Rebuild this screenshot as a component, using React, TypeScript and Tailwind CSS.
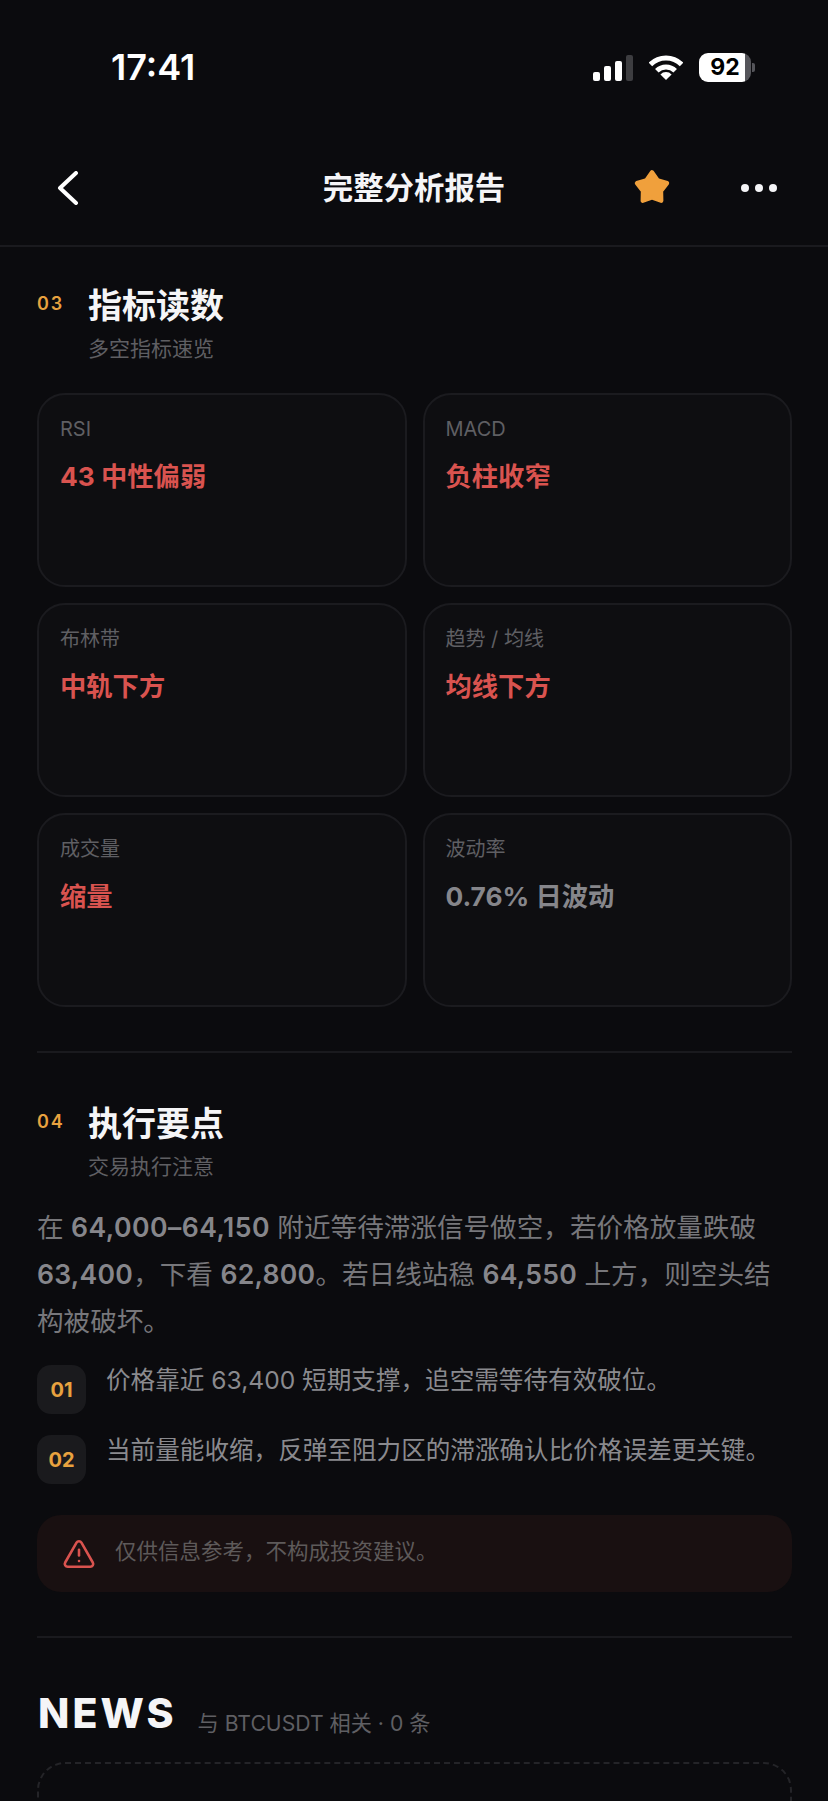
import { TriangleAlert } from "lucide-react";

const indicators = [
    { label: "RSI", value: "43 中性偏弱", color: "text-[#d9534f]" },
    { label: "MACD", value: "负柱收窄", color: "text-[#d9534f]" },
    { label: "布林带", value: "中轨下方", color: "text-[#d9534f]" },
    { label: "趋势 / 均线", value: "均线下方", color: "text-[#d9534f]" },
    { label: "成交量", value: "缩量", color: "text-[#d9534f]" },
    { label: "波动率", value: "0.76% 日波动", color: "text-[#86868b]" },
];

const points = [
    { no: "01", text: "价格靠近 63,400 短期支撑，追空需等待有效破位。" },
    { no: "02", text: "当前量能收缩，反弹至阻力区的滞涨确认比价格误差更关键。" },
];

function SectionHead({ no, title, sub }: { no: string; title: string; sub: string }) {
    return (
        <div className="flex items-start">
            <div className="w-[51px] shrink-0 pt-[9px] text-[18px] leading-[24px] font-semibold tracking-[2px] text-[#e8a23f]">{no}</div>
            <div>
                <div className="pt-px text-[34px] leading-[44px] font-bold text-[#f5f5f7]">{title}</div>
                <div className="mt-[6px] text-[21px] leading-[30px] text-[#5f5f63]">{sub}</div>
            </div>
        </div>
    );
}

export default function App() {
    return (
        <div className="h-[1801px] overflow-hidden bg-[#0b0b0e] font-['Inter','Noto_Sans_CJK_SC',sans-serif]">
            {/* Status bar */}
            <div className="flex h-[134px] items-center justify-between pl-[111px] pr-[73px]">
                <span className="text-[36px] font-semibold text-white">17:41</span>
                <div className="flex items-center">
                    <div className="flex h-[27px] items-end gap-[4px]">
                        <span className="h-[9px] w-[7px] rounded-[2px] bg-white" />
                        <span className="h-[15px] w-[7px] rounded-[2px] bg-white" />
                        <span className="h-[20px] w-[7px] rounded-[2px] bg-white" />
                        <span className="h-[26px] w-[7px] rounded-[2px] bg-[#3d3d40]" />
                    </div>
                    <svg className="ml-[16px]" width="34" height="26" viewBox="0 0 34 26" fill="none">
                        <path d="M1.4 10.4A22 22 0 0 1 32.6 10.4" stroke="#fff" strokeWidth="5" />
                        <path d="M7.8 16.8A13 13 0 0 1 26.2 16.8" stroke="#fff" strokeWidth="5" />
                        <path d="M17 26L11.4 20.4A8 8 0 0 1 22.6 20.4Z" fill="#fff" />
                    </svg>
                    <div className="ml-[16px] flex items-center">
                        <div className="flex h-[29px] w-[52px] items-center justify-center rounded-[9px] bg-[linear-gradient(90deg,#ffffff_88%,#55555a_88%)] text-[23px] font-bold text-black">
                            92
                        </div>
                        <span className="ml-[1px] h-[9px] w-[3px] rounded-r-[2px] bg-[#55555a]" />
                    </div>
                </div>
            </div>

            {/* Nav */}
            <header className="grid h-[113px] grid-cols-[1fr_auto_1fr] items-center border-b-2 border-[#1a1a1e] pb-[4px]">
                <div className="pl-[57px]">
                    <svg className="block" width="22" height="34" viewBox="0 0 22 34" fill="none">
                        <path d="M19 2L3 17L19 32" stroke="#fff" strokeWidth="4" strokeLinecap="round" strokeLinejoin="round" />
                    </svg>
                </div>
                <div className="text-[30.4px] leading-[40px] font-semibold text-[#f5f5f7]">完整分析报告</div>
                <div className="flex items-center justify-end pr-[51px]">
                    <svg width="38" height="38" viewBox="0 0 36 36" fill="#f0a03c" stroke="#f0a03c" strokeWidth="4" strokeLinejoin="round">
                        <path d="M18 3L23.3 10.7L32.3 13.4L26.6 20.8L26.8 30.1L18 27L9.2 30.1L9.4 20.8L3.7 13.4L12.7 10.7Z" />
                    </svg>
                    <div className="ml-[70px] flex gap-[6px]">
                        <span className="h-[8px] w-[8px] rounded-full bg-[#f5f5f7]" />
                        <span className="h-[8px] w-[8px] rounded-full bg-[#f5f5f7]" />
                        <span className="h-[8px] w-[8px] rounded-full bg-[#f5f5f7]" />
                    </div>
                </div>
            </header>

            <main className="pl-[37px] pr-[36px]">
                {/* 03 */}
                <section className="pt-[36px]">
                    <SectionHead no="03" title="指标读数" sub="多空指标速览" />
                    <div className="mt-[29px] grid grid-cols-2 gap-4">
                        {indicators.map((item) => (
                            <div key={item.label} className="h-[194px] rounded-[28px] border-2 border-[#1b1b1f] bg-[#0e0e11] pl-[21px] pt-[20px]">
                                <div className="text-[20px] leading-[28px] text-[#5f5f63]">{item.label}</div>
                                <div className={`mt-[16px] text-[26.3px] leading-[36px] font-bold ${item.color}`}>{item.value}</div>
                            </div>
                        ))}
                    </div>
                </section>

                <div className="mt-[44px] h-[2px] bg-[#1a1a1e]" />

                {/* 04 */}
                <section className="pt-[48px]">
                    <SectionHead no="04" title="执行要点" sub="交易执行注意" />
                    <p className="mt-[22px] text-[26.6px] leading-[47px] text-[#77777b]">
                        在 <span className="font-semibold tracking-[0.45px] text-[#86868b]">64,000–64,150</span> 附近等待滞涨信号做空，若价格放量跌破{" "}
                        <span className="font-semibold tracking-[0.25px] text-[#86868b]">63,400</span>，下看 <span className="font-semibold tracking-[0.25px] text-[#86868b]">62,800</span>。若日线站稳{" "}
                        <span className="font-semibold tracking-[0.25px] text-[#86868b]">64,550</span> 上方，则空头结构被破坏。
                    </p>
                    <div className="mt-[20px] flex flex-col gap-[21px]">
                        {points.map((p) => (
                            <div key={p.no} className="flex items-start gap-[20px]">
                                <div className="flex h-[49px] w-[49px] shrink-0 items-center justify-center rounded-[14px] bg-[#1a1a1d] text-[20px] font-bold text-[#e8a23f]">
                                    {p.no}
                                </div>
                                <div className="text-[24.6px] leading-[30px] text-[#8a8a8e]">{p.text}</div>
                            </div>
                        ))}
                    </div>
                    <div className="mt-[31px] flex h-[77px] items-center rounded-[24px] bg-[#191011] pl-[25px]">
                        <TriangleAlert size={34} strokeWidth={1.8} className="text-[#d9534f]" />
                        <span className="mb-[4px] ml-[19px] text-[21.5px] text-[#5e5a5a]">仅供信息参考，不构成投资建议。</span>
                    </div>
                </section>

                <div className="mt-[44px] h-[2px] bg-[#1a1a1e]" />

                {/* News */}
                <section className="pt-[51px]">
                    <div className="flex items-baseline">
                        <span className="pl-px text-[41px] leading-[48px] font-extrabold tracking-[3px] text-[#f5f5f7]">NEWS</span>
                        <span className="ml-[21px] translate-y-[3px] text-[21.2px] text-[#5f5f63]">与 BTCUSDT 相关 · 0 条</span>
                    </div>
                    <div className="mt-[25px] h-[200px] rounded-[28px] border-2 border-dashed border-[#242428]" />
                </section>
            </main>
        </div>
    );
}
